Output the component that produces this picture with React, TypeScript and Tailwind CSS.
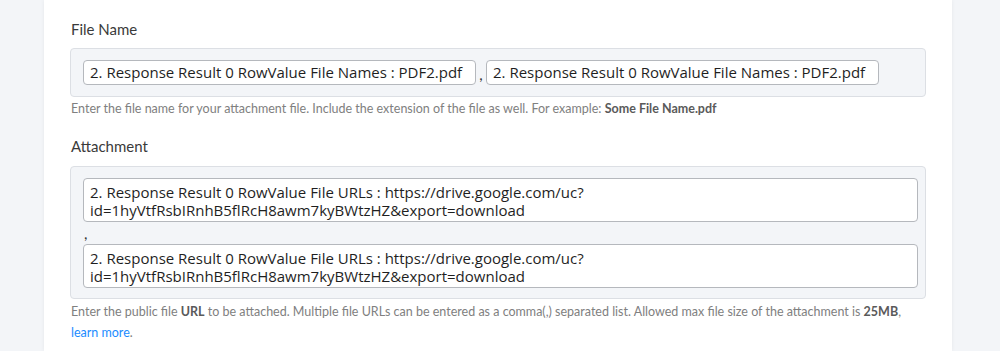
import React from "react";

const chipText = "2. Response Result 0 RowValue File Names : PDF2.pdf";

function Chip() {
  return (
    <div className="w-[393px] h-[25px] shrink-0 bg-white border border-[#b5b8bd] rounded-[4px] pl-[6px] flex items-center text-[15px] text-[#1f1f1f] whitespace-nowrap overflow-hidden [font-family:'Open_Sans',sans-serif]">
      {chipText}
    </div>
  );
}

function UrlBox() {
  return (
    <div className="h-[44px] bg-white border border-[#b5b8bd] rounded-[4px] pl-[6px] pt-[4px] text-[15px] leading-[18px] text-[#1f1f1f] whitespace-nowrap [font-family:'Open_Sans',sans-serif]">
      <div>2. Response Result 0 RowValue File URLs : https://drive.google.com/uc?</div>
      <div>id=1hyVtfRsbIRnhB5flRcH8awm7kyBWtzHZ&amp;export=download</div>
    </div>
  );
}

export default function App() {
  return (
    <div className="min-h-[351px] bg-[#f3f5f8] [font-family:'Lato',sans-serif]">
      <div className="ml-[44px] w-[908px] min-h-[351px] bg-white shadow-[0_0_4px_rgba(0,0,0,0.06)] px-[26px] pt-[19px]">
        <div className="text-[15px] leading-[20px] text-[#3a3a3a] pl-[1px]">File Name</div>
        <div className="mt-[9px] h-[49px] bg-[#f3f5f8] border border-[#dcdfe4] rounded-[4px] pl-[12px] flex items-center">
          <Chip />
          <span className="w-[10px] text-center text-[15px] text-[#333] self-center mt-[4px]">,</span>
          <Chip />
        </div>
        <div className="mt-[3px] text-[12.5px] leading-[18px] text-[#808080] pl-[1px]">
          Enter the file name for your attachment file. Include the extension of the file as well. For example:{" "}
          <b className="font-bold text-[#5a5a5a]">Some File Name.pdf</b>
        </div>
        <div className="mt-[18px] text-[15px] leading-[20px] text-[#3a3a3a] pl-[1px]">Attachment</div>
        <div className="mt-[10px] bg-[#f3f5f8] border border-[#dcdfe4] rounded-[4px] pl-[12px] pr-[7px] pt-[11px] pb-[10px]">
          <UrlBox />
          <div className="h-[22px] text-[15px] leading-[22px] text-[#333] pl-[1px]">,</div>
          <UrlBox />
        </div>
        <div className="mt-[4px] text-[12.5px] leading-[18px] text-[#808080] pl-[1px]">
          Enter the public file <b className="font-bold text-[#5a5a5a]">URL</b> to be attached. Multiple file URLs can be entered as a comma(,) separated list. Allowed max file size of the attachment is{" "}
          <b className="font-bold text-[#5a5a5a]">25MB</b>,
        </div>
        <div className="mt-[3px] text-[12.5px] leading-[18px] pl-[1px]">
          <a className="text-[#1a8cff]">learn more</a>
          <span className="text-[#808080]">.</span>
        </div>
      </div>
    </div>
  );
}
